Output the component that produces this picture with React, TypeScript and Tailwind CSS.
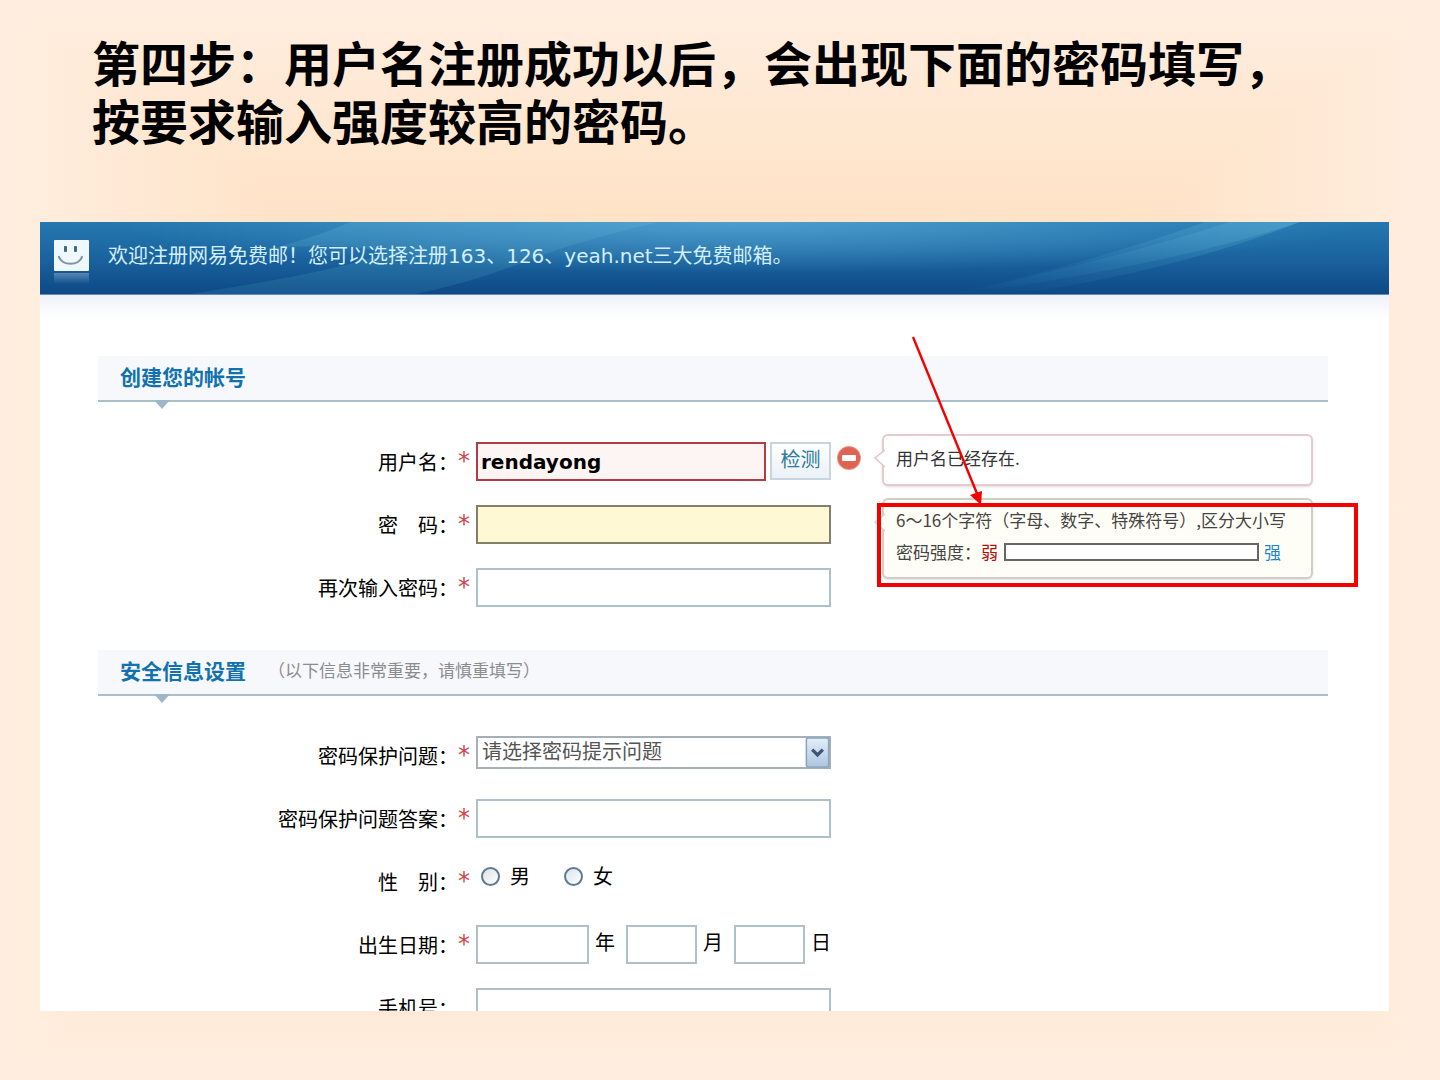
import { useId, type ReactNode } from "react";
import { clsx } from "clsx";

const inputBase = "h-[39px] border-2 px-1 text-[20px] outline-none";
const plainInput = "border-[#b0c0ca] bg-white";

const SmileLogo = () => (
  <svg width="35" height="44" viewBox="0 0 35 44" className="mt-2 shrink-0" aria-hidden="true">
    <defs>
      <linearGradient id="logo-reflect" x1="0" y1="0" x2="0" y2="1">
        <stop offset="0" stopColor="#fff" stopOpacity="0.28" />
        <stop offset="1" stopColor="#fff" stopOpacity="0" />
      </linearGradient>
    </defs>
    <rect width="35" height="31" rx="1" fill="#eef8fd" />
    <rect x="10" y="6" width="3" height="6" rx="1" fill="#3f6a80" />
    <rect x="20" y="6" width="3" height="6" rx="1" fill="#3f6a80" />
    <path d="M5 17 C8 26 25 26 28 17" fill="none" stroke="#7d94a1" strokeWidth="2.2" strokeLinecap="round" />
    <rect y="33" width="35" height="11" fill="url(#logo-reflect)" />
  </svg>
);

const Banner = () => (
  <header className="relative h-[73px] shrink-0 border-b border-[#5d8db8] bg-gradient-to-b from-[#2578b0] via-[#1a639f] to-[#0e4986]">
    <svg className="absolute inset-0 h-full w-full" viewBox="0 0 1349 73" preserveAspectRatio="none" aria-hidden="true">
      <defs>
        <radialGradient id="glow" gradientUnits="userSpaceOnUse" cx="0" cy="0" r="1" gradientTransform="translate(700 0) scale(620 52)">
          <stop offset="0" stopColor="#63b2dd" stopOpacity="0.65" />
          <stop offset="1" stopColor="#63b2dd" stopOpacity="0" />
        </radialGradient>
        <linearGradient id="wedge" x1="0" y1="0" x2="0" y2="1">
          <stop offset="0" stopColor="#5fb2d6" stopOpacity="0.3" />
          <stop offset="1" stopColor="#3f97b4" stopOpacity="0.2" />
        </linearGradient>
        <linearGradient id="beam" x1="1" y1="0" x2="0" y2="1">
          <stop offset="0" stopColor="#5fb2d6" stopOpacity="0.35" />
          <stop offset="1" stopColor="#3f97c4" stopOpacity="0" />
        </linearGradient>
      </defs>
      <rect width="1349" height="73" fill="url(#glow)" />
      <path d="M310 0 L620 0 Q540 18 480 42 Q430 62 375 73 L150 73 Q300 50 350 30 Q300 22 235 26 Q280 14 310 0 Z" fill="url(#wedge)" />
      <path d="M1190 0 L1260 0 Q1130 44 920 73 L910 73 Q1060 42 1190 0 Z" fill="url(#beam)" />
      <path d="M1165 0 L1260 0 Q1150 44 1010 68 Q960 72 925 70 Q1060 38 1165 0 Z" fill="url(#beam)" />
    </svg>
    <div className="relative flex h-full items-center gap-[19px] pl-[14px]">
      <SmileLogo />
      <p className="pb-1 text-[20px] leading-[26px] text-[#d3effc] [font-family:'DejaVu_Sans','Noto_Sans_CJK_SC',sans-serif]">
        {"欢迎注册网易免费邮\uff01您可以选择注册163、126、yeah.net三大免费邮箱。"}
      </p>
    </div>
  </header>
);

const SectionTitle = ({ title, note }: { title: string; note?: string }) => (
  <div className="relative mr-[61px] ml-[58px] flex h-[46px] items-center border-b-2 border-[#a9c0cb] bg-[#f6f8fc] pb-1 pl-[22px]">
    <h2 className="text-[21px] leading-[28px] font-bold text-[#1272ae]">{title}</h2>
    {note && <span className="ml-[22px] text-[17px] leading-[28px] text-[#8c8c8c]">{note}</span>}
    <svg width="16" height="9" viewBox="0 0 16 9" className="absolute top-full left-[56px]" aria-hidden="true">
      <path d="M0 0 H16 L8 9 Z" fill="#9db6ca" />
    </svg>
  </div>
);

interface RowProps {
  label: string;
  htmlFor?: string;
  required?: boolean;
  children: ReactNode;
}

const Row = ({ label, htmlFor, required = true, children }: RowProps) => (
  <div className="flex h-[39px]">
    <label htmlFor={htmlFor} className="w-[418px] shrink-0 text-right text-[20px] leading-[39px] whitespace-pre text-black">
      {label + "\uff1a"}
    </label>
    <span className="w-[18px] shrink-0 text-[24px] leading-[39px] text-[#d0454a] [font-family:'DejaVu_Sans',sans-serif]">
      {required && "*"}
    </span>
    {children}
  </div>
);

interface TextRowProps {
  label: string;
  type?: string;
  required?: boolean;
  className?: string;
}

const TextRow = ({ label, type = "text", required, className = plainInput }: TextRowProps) => {
  const id = useId();
  return (
    <Row label={label} htmlFor={id} required={required}>
      <input id={id} type={type} className={clsx(inputBase, "w-[355px]", className)} />
    </Row>
  );
};

const BubbleTip = ({ fill, stroke }: { fill: string; stroke: string }) => (
  <svg width="12" height="20" viewBox="0 0 12 20" className="absolute top-[13px] -left-[11px]" aria-hidden="true">
    <path d="M12 1 L2 9 L12 18" fill={fill} stroke={stroke} strokeWidth="1.6" />
  </svg>
);

// red frame and arrow laid over the password tip
const Callout = () => (
  <>
    <div className="pointer-events-none absolute top-[3px] -left-[7px] h-[84px] w-[481px] border-4 border-[#f40000]" />
    <svg width="74" height="174" viewBox="0 0 74 174" className="pointer-events-none absolute -top-[164px] left-[28px]" aria-hidden="true">
      <line x1="1" y1="1" x2="66" y2="160" stroke="#f40000" strokeWidth="2.4" />
      <path d="M58 159 L70 155 L69 169 Z" fill="#f40000" />
    </svg>
  </>
);

const Tips = () => (
  <div className="mt-8 ml-[21px] flex max-w-[431px] flex-1 flex-col gap-[12px] whitespace-nowrap">
    <div className="relative h-[52px] rounded-md border-2 border-[#e6cace] bg-white pl-[12px] shadow-sm">
      <BubbleTip fill="#fff" stroke="#e0c8cd" />
      <p className="text-[17px] leading-[43px] text-[#333]">用户名已经存在.</p>
    </div>
    <div className="relative h-[81px] rounded-md border-2 border-[#cfcfc6] bg-[#fffef6] pt-1 pl-[12px] shadow-sm">
      <BubbleTip fill="#fffef6" stroke="#d3d3cc" />
      <p className="text-[17px] leading-[32px] text-[#444]">
        {"6\uff5e16个字符\uff08字母、数字、特殊符号\uff09,区分大小写"}
      </p>
      <div className="flex items-center text-[17px] leading-[32px] text-[#444]">
        {"密码强度\uff1a"}
        <span className="text-[#b01010]">弱</span>
        <div className="mr-[5px] ml-[6px] h-[18px] w-[255px] border-2 border-[#666] bg-white" />
        <span className="text-[#1a86c8]">强</span>
      </div>
      <Callout />
    </div>
  </div>
);

const AccountForm = () => (
  <div className="flex">
    <div className="mt-10 flex w-[821px] shrink-0 flex-col gap-6">
      <Row label="用户名" htmlFor="username">
        <input
          id="username"
          defaultValue="rendayong"
          className="h-[39px] w-[290px] border-2 border-[#b23c45] bg-[#fdf4f4] pl-[3px] text-[20px] font-bold text-black outline-none [font-family:'DejaVu_Sans',sans-serif]"
        />
        <button
          type="button"
          className="ml-1 h-[38px] w-[61px] border-2 border-[#c9d5de] bg-gradient-to-b from-white to-[#eaf1f7] pb-1 text-[20px] leading-none text-[#2b7b9d]"
        >
          检测
        </button>
        <svg width="24" height="24" viewBox="0 0 24 24" className="mt-1 ml-[6px] shrink-0" aria-hidden="true">
          <circle cx="12" cy="12" r="12" fill="#ea9a8a" />
          <circle cx="12" cy="12" r="11" fill="#dd6353" />
          <rect x="5" y="9" width="14" height="6" rx="1" fill="#fff" />
        </svg>
      </Row>
      <TextRow label={"密\u3000码"} type="password" className="border-[#85806a] bg-[#fef8d4]" />
      <TextRow label="再次输入密码" type="password" />
    </div>
    <Tips />
  </div>
);

const genders = ["男", "女"];

const dateParts = [
  { unit: "年", width: "w-[113px]" },
  { unit: "月", width: "w-[71px]" },
  { unit: "日", width: "w-[71px]" },
];

const SecurityForm = () => (
  <div className="mt-10 flex flex-col gap-6">
    <Row label="密码保护问题" htmlFor="question">
      <div className="relative h-[33px] w-[355px]">
        <select id="question" className="h-full w-full appearance-none border-2 border-[#a5b0b8] bg-white pb-1 pl-1 text-[20px] leading-[26px] text-[#555] outline-none">
          <option>请选择密码提示问题</option>
        </select>
        <svg width="25" height="31" viewBox="0 0 25 32" className="pointer-events-none absolute top-px right-px" aria-hidden="true">
          <defs>
            <linearGradient id="drop" x1="0" y1="0" x2="0" y2="1">
              <stop offset="0" stopColor="#e3eefa" />
              <stop offset="1" stopColor="#adc6e2" />
            </linearGradient>
          </defs>
          <rect x="1" y="1" width="23" height="30" rx="2" fill="url(#drop)" stroke="#8fa5bd" strokeWidth="1.6" />
          <path d="M7 13 L12.5 18.5 L18 13" fill="none" stroke="#3d5675" strokeWidth="3.4" />
        </svg>
      </div>
    </Row>
    <TextRow label="密码保护问题答案" />
    <Row label={"性\u3000别"}>
      <div className="flex h-[28px] items-center gap-[34px] pl-[5px]">
        {genders.map((name) => (
          <label key={name} className="flex items-center gap-[10px] text-[20px] leading-[28px] text-black">
            <input
              type="radio"
              name="gender"
              value={name}
              className="h-[19px] w-[19px] appearance-none rounded-full border-2 border-[#5d7a94] bg-gradient-to-br from-[#dde3e8] to-white checked:bg-[#5d7a94]"
            />
            {name}
          </label>
        ))}
      </div>
    </Row>
    <Row label="出生日期">
      <div className="flex gap-[11px]">
        {dateParts.map(({ unit, width }) => (
          <label key={unit} className="flex gap-[6px] text-[20px] leading-[34px] text-black">
            <input type="text" className={clsx(inputBase, plainInput, width)} />
            {unit}
          </label>
        ))}
      </div>
    </Row>
    <TextRow label="手机号" required={false} />
  </div>
);

export default function App() {
  return (
    <main
      lang="zh-CN"
      className="flex h-screen flex-col overflow-hidden bg-[linear-gradient(to_right,#ffeee0,#ffd2a2,#ffeee0),linear-gradient(to_bottom,#ffeee0,#ffd2a2,#ffeee0)] pt-8 pr-[51px] pb-[69px] pl-10 bg-blend-lighten [font-family:'Noto_Sans_CJK_SC',sans-serif]"
    >
      <h1 className="mb-[74px] pl-[52px] text-[48px] leading-[58px] font-bold whitespace-nowrap text-black">
        {"第四步\uff1a用户名注册成功以后\uff0c会出现下面的密码填写\uff0c"}
        <br />
        按要求输入强度较高的密码。
      </h1>
      <section className="flex min-h-0 flex-1 flex-col overflow-hidden bg-white">
        <Banner />
        <div className="h-[24px] shrink-0 bg-gradient-to-b from-[#eef2f8] to-white" />
        <form className="pt-[37px]">
          <SectionTitle title="创建您的帐号" />
          <AccountForm />
          <div className="mt-[43px]">
            <SectionTitle title="安全信息设置" note={"\uff08以下信息非常重要\uff0c请慎重填写\uff09"} />
          </div>
          <SecurityForm />
        </form>
      </section>
    </main>
  );
}
